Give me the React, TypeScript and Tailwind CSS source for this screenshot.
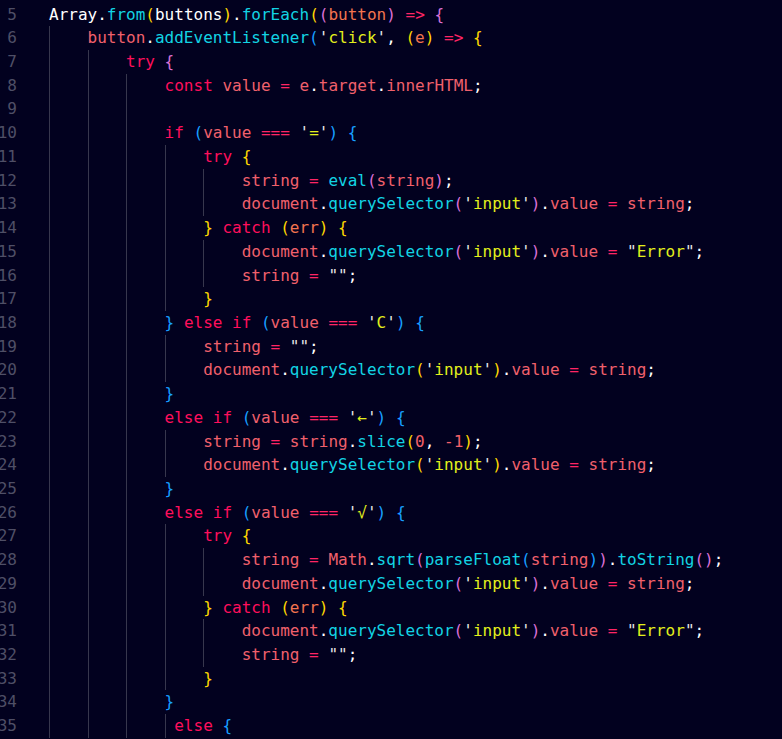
import React from "react";

type Tok = [string, string];

const c: Record<string, string> = {
  k: "text-[#ff0f5c]",
  v: "text-[#f0606c]",
  p: "text-[#f3744f]",
  f: "text-[#12d4e4]",
  s: "text-[#e2f01c]",
  w: "text-[#ffffff]",
  q: "text-[#e6e6e6]",
  o: "text-[#ff2565]",
  Y: "text-[#ffd700]",
  M: "text-[#da70d6]",
  B: "text-[#179fff]",
  n: "text-[#f3606a]",
};

const sp: Tok = ["w", " "];
const qs = (s: string, q = "'"): Tok[] => [["q", q], ["s", s], ["q", q]];
const docSel = (b: string, rhs: Tok[]): Tok[] => [
  ["v", "document"], ["w", "."], ["f", "querySelector"], [b, "("], ...qs("input"), [b, ")"],
  ["w", "."], ["v", "value"], sp, ["o", "="], sp, ...rhs, ["w", ";"],
];
const strEmpty: Tok[] = [["v", "string"], sp, ["o", "="], sp, ["q", '""'], ["w", ";"]];
const elseIf = (ch: string): Tok[] => [
  ["k", "else"], sp, ["k", "if"], sp, ["B", "("], ["v", "value"], sp, ["o", "==="], sp,
  ...qs(ch), ["B", ")"], sp, ["B", "{"],
];

const lines: { n: number; ind: number; g: number[]; t: Tok[] }[] = [
  { n: 5, ind: 0, g: [], t: [["w", "Array"], ["w", "."], ["f", "from"], ["Y", "("], ["w", "buttons"], ["Y", ")"], ["w", "."], ["f", "forEach"], ["Y", "("], ["M", "("], ["p", "button"], ["M", ")"], sp, ["o", "=>"], sp, ["M", "{"]] },
  { n: 6, ind: 4, g: [0], t: [["v", "button"], ["w", "."], ["f", "addEventListener"], ["B", "("], ...qs("click"), ["w", ","], sp, ["Y", "("], ["p", "e"], ["Y", ")"], sp, ["o", "=>"], sp, ["Y", "{"]] },
  { n: 7, ind: 8, g: [0, 4], t: [["k", "try"], sp, ["M", "{"]] },
  { n: 8, ind: 12, g: [0, 4, 8], t: [["k", "const"], sp, ["v", "value"], sp, ["o", "="], sp, ["v", "e"], ["w", "."], ["v", "target"], ["w", "."], ["v", "innerHTML"], ["w", ";"]] },
  { n: 9, ind: 0, g: [0, 4, 8], t: [] },
  { n: 10, ind: 12, g: [0, 4, 8], t: [["k", "if"], sp, ["B", "("], ["v", "value"], sp, ["o", "==="], sp, ...qs("="), ["B", ")"], sp, ["B", "{"]] },
  { n: 11, ind: 16, g: [0, 4, 8, 12], t: [["k", "try"], sp, ["Y", "{"]] },
  { n: 12, ind: 20, g: [0, 4, 8, 12, 16], t: [["v", "string"], sp, ["o", "="], sp, ["f", "eval"], ["M", "("], ["v", "string"], ["M", ")"], ["w", ";"]] },
  { n: 13, ind: 20, g: [0, 4, 8, 12, 16], t: docSel("M", [["v", "string"]]) },
  { n: 14, ind: 16, g: [0, 4, 8, 12], t: [["Y", "}"], sp, ["k", "catch"], sp, ["Y", "("], ["p", "err"], ["Y", ")"], sp, ["Y", "{"]] },
  { n: 15, ind: 20, g: [0, 4, 8, 12, 16], t: docSel("M", qs("Error", '"')) },
  { n: 16, ind: 20, g: [0, 4, 8, 12, 16], t: strEmpty },
  { n: 17, ind: 16, g: [0, 4, 8, 12], t: [["Y", "}"]] },
  { n: 18, ind: 12, g: [0, 4, 8], t: [["B", "}"], sp, ...elseIf("C")] },
  { n: 19, ind: 16, g: [0, 4, 8, 12], t: strEmpty },
  { n: 20, ind: 16, g: [0, 4, 8, 12], t: docSel("Y", [["v", "string"]]) },
  { n: 21, ind: 12, g: [0, 4, 8], t: [["B", "}"]] },
  { n: 22, ind: 12, g: [0, 4, 8], t: elseIf("←") },
  { n: 23, ind: 16, g: [0, 4, 8, 12], t: [["v", "string"], sp, ["o", "="], sp, ["v", "string"], ["w", "."], ["f", "slice"], ["Y", "("], ["n", "0"], ["w", ","], sp, ["n", "-1"], ["Y", ")"], ["w", ";"]] },
  { n: 24, ind: 16, g: [0, 4, 8, 12], t: docSel("Y", [["v", "string"]]) },
  { n: 25, ind: 12, g: [0, 4, 8], t: [["B", "}"]] },
  { n: 26, ind: 12, g: [0, 4, 8], t: elseIf("√") },
  { n: 27, ind: 16, g: [0, 4, 8, 12], t: [["k", "try"], sp, ["Y", "{"]] },
  { n: 28, ind: 20, g: [0, 4, 8, 12, 16], t: [["v", "string"], sp, ["o", "="], sp, ["v", "Math"], ["w", "."], ["f", "sqrt"], ["M", "("], ["f", "parseFloat"], ["B", "("], ["v", "string"], ["B", ")"], ["M", ")"], ["w", "."], ["f", "toString"], ["M", "()"], ["w", ";"]] },
  { n: 29, ind: 20, g: [0, 4, 8, 12, 16], t: docSel("M", [["v", "string"]]) },
  { n: 30, ind: 16, g: [0, 4, 8, 12], t: [["Y", "}"], sp, ["k", "catch"], sp, ["Y", "("], ["p", "err"], ["Y", ")"], sp, ["Y", "{"]] },
  { n: 31, ind: 20, g: [0, 4, 8, 12, 16], t: docSel("M", qs("Error", '"')) },
  { n: 32, ind: 20, g: [0, 4, 8, 12, 16], t: strEmpty },
  { n: 33, ind: 16, g: [0, 4, 8, 12], t: [["Y", "}"]] },
  { n: 34, ind: 12, g: [0, 4, 8], t: [["B", "}"]] },
  { n: 35, ind: 13, g: [0, 4, 8, 12], t: [["k", "else"], sp, ["B", "{"]] },
];

export default function App() {
  return (
    <div
      className="w-[782px] h-[739px] overflow-hidden bg-[#02011f] pt-[2.6px] text-[16px]"
      style={{ fontFamily: '"DejaVu Sans Mono", "Liberation Mono", monospace' }}
    >
      {lines.map((ln) => (
        <div key={ln.n} className="flex h-[23.72px] leading-[23.72px]">
          <div className="ml-[-23px] w-[40px] shrink-0 text-right text-[#4f4f66]">{ln.n}</div>
          <div className="relative ml-[32px] grow whitespace-pre">
            {ln.g.map((g) => (
              <span
                key={g}
                className="absolute top-0 bottom-0 w-px bg-[#37374d]"
                style={{ left: `${g}ch` }}
              />
            ))}
            <span>{" ".repeat(ln.ind)}</span>
            {ln.t.map((t, i) => (
              <span key={i} className={c[t[0]]}>
                {t[1]}
              </span>
            ))}
          </div>
        </div>
      ))}
    </div>
  );
}
